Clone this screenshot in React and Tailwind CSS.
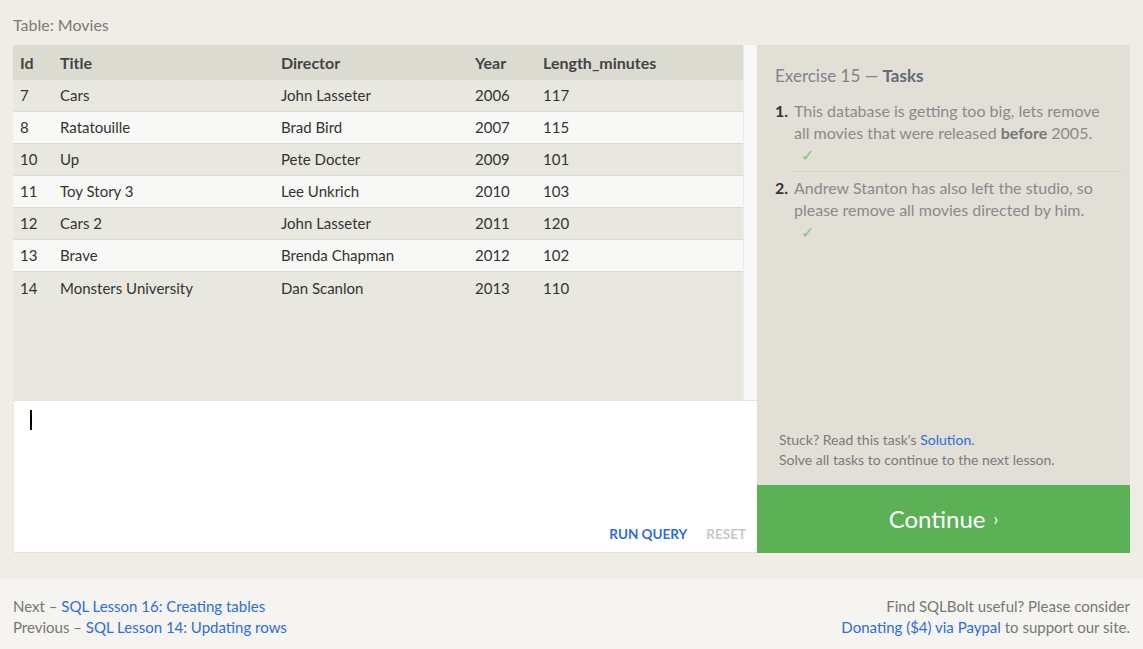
import React from "react";

const rows = [
  ["7", "Cars", "John Lasseter", "2006", "117"],
  ["8", "Ratatouille", "Brad Bird", "2007", "115"],
  ["10", "Up", "Pete Docter", "2009", "101"],
  ["11", "Toy Story 3", "Lee Unkrich", "2010", "103"],
  ["12", "Cars 2", "John Lasseter", "2011", "120"],
  ["13", "Brave", "Brenda Chapman", "2012", "102"],
  ["14", "Monsters University", "Dan Scanlon", "2013", "110"],
];

export default function App() {
  return (
    <div
      className="w-[1143px] h-[649px] bg-[#f0ede6] flex flex-col overflow-hidden"
      style={{ fontFamily: "Lato, 'Open Sans', sans-serif" }}
    >
      <div className="px-[13px] pt-[15px] pb-0">
        <div className="text-[16px] leading-[20px] text-[#7a7a7a] h-[30px]">Table: Movies</div>
        <div className="flex w-[1117px] h-[508px]">
          {/* left */}
          <div className="w-[744px] flex flex-col">
            <div className="h-[355px] flex bg-[#e9e8e0]">
              <div className="flex-1">
                <div className="grid grid-cols-[40px_221px_194px_68px_1fr] h-[35px] items-center bg-[#dcdbd2] text-[16px] font-bold text-[#444] px-[7px]">
                  <div>Id</div>
                  <div>Title</div>
                  <div>Director</div>
                  <div>Year</div>
                  <div>Length_minutes</div>
                </div>
                {rows.map((r, i) => (
                  <div
                    key={i}
                    className={
                      "grid grid-cols-[40px_221px_194px_68px_1fr] items-center text-[15px] text-[#333] px-[7px] " +
                      (i % 2 === 1 ? "bg-[#f8f8f6] " : "bg-[#e9e8e0] ") +
                      (i === rows.length - 1 ? "h-[33px]" : "h-[32px] border-b border-[#dcdbd3]")
                    }
                  >
                    {r.map((c, j) => (
                      <div key={j}>{c}</div>
                    ))}
                  </div>
                ))}
              </div>
              <div className="w-[14px] bg-[#f8f8f8] border-l border-[#ecebe6]"></div>
            </div>
            <div className="h-[153px] bg-white border-t border-[#e4e2da] border-l border-l-[#e8e6df] border-b border-b-[#e4e2da] flex flex-col justify-between">
              <div className="pl-[16px] pt-[9px]">
                <div className="w-[2px] h-[20px] bg-black"></div>
              </div>
              <div className="flex justify-end gap-[19px] pr-[11px] pb-[8px] text-[13.5px] font-bold">
                <span className="text-[#2f6dd8]">RUN QUERY</span>
                <span className="text-[#c8c8c8]">RESET</span>
              </div>
            </div>
          </div>
          {/* right */}
          <div className="w-[373px] flex flex-col bg-[#e2dfd7]">
            <div className="flex-1 flex flex-col justify-between pl-[18px] pr-[8px] pt-[20px] pb-[15px]">
              <div>
                <div className="text-[17px] text-[#7d838f] leading-[22px]">
                  Exercise 15 — <span className="font-bold text-[#646a78]">Tasks</span>
                </div>
                <div className="mt-[13px] text-[16px] leading-[22px] text-[#8a8a8a]">
                  <div className="flex">
                    <span className="w-[19px] font-bold text-[#333]">1.</span>
                    <div className="flex-1 border-b border-[#d4d1c7] pb-[5px]">
                      <div className="pr-[8px]">
                        This database is getting too big, lets remove all movies that were released{" "}
                        <b className="text-[#777]">before</b> 2005.
                      </div>
                      <div className="pl-[7px] text-[#7fc77f]">✓</div>
                    </div>
                  </div>
                  <div className="flex mt-[5px]">
                    <span className="w-[19px] font-bold text-[#333]">2.</span>
                    <div className="flex-1 pr-[8px]">
                      Andrew Stanton has also left the studio, so please remove all movies directed by him.
                      <div className="pl-[7px] text-[#7fc77f]">✓</div>
                    </div>
                  </div>
                </div>
              </div>
              <div className="pl-[4px] text-[14px] leading-[20px] text-[#7a7a7a]">
                <div>
                  Stuck? Read this task's <span className="text-[#2f6dd8]">Solution</span>.
                </div>
                <div>Solve all tasks to continue to the next lesson.</div>
              </div>
            </div>
            <div className="h-[68px] bg-[#5cb157] flex items-center justify-center text-white text-[24px]">
              Continue <span className="ml-[8px] text-[17px]">›</span>
            </div>
          </div>
        </div>
      </div>
      <div className="mt-[26px] flex-1 bg-[#f5f4f0] px-[13px] pt-[17px] flex justify-between text-[15px] leading-[21px] text-[#777]">
        <div>
          <div>
            Next – <span className="text-[#2f6dd8]">SQL Lesson 16: Creating tables</span>
          </div>
          <div>
            Previous – <span className="text-[#2f6dd8]">SQL Lesson 14: Updating rows</span>
          </div>
        </div>
        <div className="text-right">
          <div>Find SQLBolt useful? Please consider</div>
          <div>
            <span className="text-[#2f6dd8]">Donating ($4) via Paypal</span> to support our site.
          </div>
        </div>
      </div>
    </div>
  );
}
